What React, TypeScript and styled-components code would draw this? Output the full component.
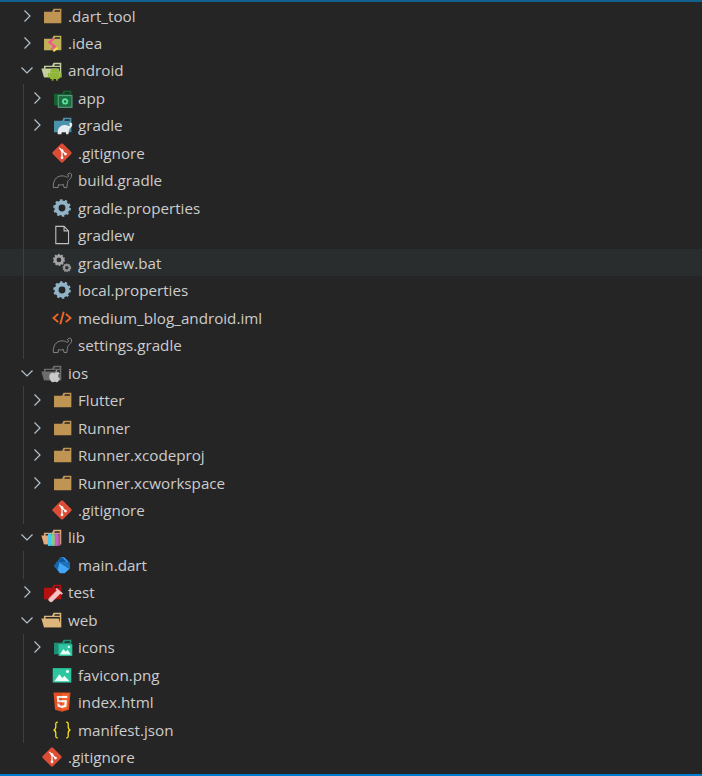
import React from 'react';
import styled, { createGlobalStyle } from 'styled-components';

const GlobalStyle = createGlobalStyle`
  html, body {
    margin: 0;
    padding: 0;
    background: #252526;
    overflow: hidden;
  }
`;

const FOLDER_CLOSED = 'M27.5,5.5H18.2L16.1,9.7H4.4V26.5H29.6V5.5Zm0,4.2H19.3l1.1-2.1h7.1Z';
const FOLDER_OPEN_BACK = 'M27.4,5.5H18.2L16.1,9.7H4.3V26.5H29.5V5.5Zm0,18.7H6.6V11.8H27.4Zm0-14.5H19.2l1-2.1h7.1V9.7Z';
const ELEPHANT =
  'M3.500 27C2.500 18 7 10 16 10c3 0 5 .700 6.500 1.700 1.500.800 3.200-.200 3.200-1.700 0-1-1-1.600-1.800-1.200.300-1.800 2-3 3.600-2.800 2 .300 2.800 2 2.300 4.500-.600 3-3 4.500-4.800 6.500-1 1.500-1.500 6-2 10h-4c-.500-2-.700-3-1-4.500-3 1-5 1-7 0-.300 1.700-.600 3-.800 4.500z';

const Closed = ({ color }: { color: string }) => <path d={FOLDER_CLOSED} fill={color} />;

const Opened = ({ color }: { color: string }) => (
  <>
    <path d={FOLDER_OPEN_BACK} fill={color} />
    <polygon points="25.7 13.7 .5 13.7 4.3 26.5 29.500 26.500" fill={color} />
  </>
);

const Gear = ({ cx, cy, r, color }: { cx: number; cy: number; r: number; color: string }) => {
  const width = r * 0.75;
  const outer = r + width * 0.1;
  const teeth = (2 * Math.PI * outer) / 16;
  return (
    <>
      <circle cx={cx} cy={cy} r={r} fill="none" stroke={color} strokeWidth={width} />
      <circle
        cx={cx}
        cy={cy}
        r={outer + width * 0.35}
        fill="none"
        stroke={color}
        strokeWidth={width * 0.7}
        strokeDasharray={`${teeth} ${teeth}`}
      />
    </>
  );
};

const DartTool = () => <Closed color="#c09553" />;

const Idea = () => (
  <>
    <Closed color="#c2b05a" />
    <path d="M19 9.500 12 15l8 6-5 4" fill="none" stroke="#f0568a" strokeWidth="3" />
    <path d="M18 28l6-5" stroke="#f5e04a" strokeWidth="3" />
  </>
);

const AndroidFolder = () => (
  <>
    <Opened color="#c3cf9c" />
    <path d="M13 20a7 6.500 0 0 1 14 0z" fill="#8fb53a" />
    <rect x="13" y="20.500" width="14" height="8.500" rx="1" fill="#8fb53a" />
    <rect x="10" y="20" width="2.400" height="7" rx="1.200" fill="#8fb53a" />
    <rect x="27.600" y="20" width="2.400" height="7" rx="1.200" fill="#8fb53a" />
    <rect x="15.500" y="28" width="2.600" height="3.500" fill="#8fb53a" />
    <rect x="21.900" y="28" width="2.600" height="3.500" fill="#8fb53a" />
  </>
);

const AppFolder = () => (
  <>
    <Closed color="#14632f" />
    <rect x="10.500" y="12.500" width="20" height="17" fill="#1a6d3f" stroke="#5fa58a" strokeWidth="1.500" />
    <Gear cx={20.500} cy={21} r={3} color="#62e0a0" />
  </>
);

const GradleFolder = () => (
  <>
    <Closed color="#4b93ad" />
    <path d={ELEPHANT} transform="translate(7 8) scale(.8)" fill="#e6ecef" />
  </>
);

const GitFile = () => (
  <>
    <rect x="5.500" y="5.500" width="21" height="21" rx="2" transform="rotate(45 16 16)" fill="#dd4c35" />
    <path d="M12 8.500 21 17.500M16 12.500V23" stroke="#fff" strokeWidth="1.800" fill="none" />
    <circle cx="16" cy="12.500" r="2" fill="#fff" />
    <circle cx="21" cy="17.500" r="2" fill="#fff" />
    <circle cx="16" cy="23" r="2" fill="#fff" />
  </>
);

const GradleFile = () => <path d={ELEPHANT} fill="none" stroke="#8f8f8f" strokeWidth="1.300" />;

const GearFile = () => <Gear cx={16} cy={16} r={8} color="#90b4c6" />;

const PlainFile = () => (
  <path d="M7 3.500h12l6.500 6.500v18.500H7zM19 3.500V10h6.500" fill="none" stroke="#c0c0c0" strokeWidth="1.600" />
);

const GearsFile = () => (
  <>
    <Gear cx={11.500} cy={11.500} r={5.500} color="#a3a3a3" />
    <Gear cx={23} cy={23} r={4} color="#949494" />
  </>
);

const XmlFile = () => (
  <path
    d="M10.500 10 3.500 16l7 6M21.500 10l7 6-7 6M18.500 7l-5 18"
    fill="none"
    stroke="#f1662a"
    strokeWidth="2.700"
  />
);

const IosFolder = () => (
  <>
    <Opened color="#6d6d6d" />
    <path
      d="M21 15c1.500-.4 2.500-1.700 2.500-3.300-1.500.2-2.700 1.500-2.500 3.300zm-1 1.500c-1.200 0-2-.8-3.300-.8-2.400 0-4.700 2-4.700 5.500 0 3.800 2.800 8.300 5 8.300 1.200 0 1.800-.8 3-.8s1.800.8 3 .8c1.800 0 3.500-2.800 4.500-5.500-3.500-1.500-3.500-6 0-7.300-1.200-1.500-3-1.700-4-1.700-1.300 0-2.400.8-3.500.8z"
      fill="#c9c9c9"
    />
  </>
);

const PlainFolder = () => <Closed color="#c09553" />;

const LibFolder = () => (
  <>
    <Opened color="#e3ab7b" />
    <rect x="10" y="11" width="5" height="18" fill="#44c7f0" />
    <rect x="15" y="11" width="5" height="18" fill="#7ecf7a" />
    <rect x="20" y="11" width="5" height="18" fill="#c65fd0" />
    <rect x="25" y="11" width="3" height="18" fill="#a2508f" />
  </>
);

const DartFile = () => (
  <>
    <path d="M4.500 17 14 5c2-1 4-.500 6 .500l7 7v9l-7 6.500h-7z" fill="#42a5f5" />
    <path d="M4.500 17 14 5c.800-.300 1.500-.400 2.300-.400L27 16v-3.500L20 5.500l5 7H12L9.500 23z" fill="#0d5b9e" />
    <path d="M4.500 17 14 5 12 13l-2.500 10z" fill="#1667ad" />
    <path d="M12 12.500h13l2 3.500V22L12 12.500z" fill="#1f6fb5" />
  </>
);

const TestFolder = () => (
  <>
    <Closed color="#b71010" />
    <path d="M24 13 12 25a3 3 0 0 0 5 4l12-12" fill="#f7c5c5" stroke="#f7c5c5" strokeWidth="1" />
    <path d="M22 11l9 8" stroke="#f7c5c5" strokeWidth="2.500" />
  </>
);

const WebFolder = () => <Opened color="#dcb67a" />;

const IconsFolder = () => (
  <>
    <Closed color="#1f8f76" />
    <rect x="11" y="12" width="20" height="17" fill="#2cc7a0" />
    <path d="M13 27l5-8 3.500 4 2.500-3 5 7z" fill="#eafff8" />
    <circle cx="26" cy="16" r="1.800" fill="#eafff8" />
  </>
);

const ImageFile = () => (
  <>
    <rect x="2.500" y="6" width="27" height="21" fill="#2cc7a0" />
    <path d="M5 25l7-10 4.500 5.500 3-3.500 7.500 8z" fill="#f0fff9" />
    <circle cx="24" cy="11" r="2.200" fill="#f0fff9" />
  </>
);

const HtmlFile = () => (
  <>
    <polygon points="5.902 27.201 3.655 2 28.345 2 26.095 27.197 15.985 30 5.902 27.201" fill="#e44f26" />
    <polygon points="16 27.858 24.17 25.593 26.092 4.061 16 4.061 16 27.858" fill="#f1662a" />
    <polygon points="16 13.407 11.91 13.407 11.628 10.242 16 10.242 16 7.151 8.25 7.151 8.324 7.981 9.083 16.498 16 16.498 16 13.407" fill="#ebebeb" />
    <polygon points="16 21.434 12.544 20.509 12.324 18.044 9.221 18.044 9.654 22.896 16 24.65 16 21.434" fill="#ebebeb" />
    <polygon points="15.989 13.407 15.989 16.498 19.795 16.498 19.437 20.507 15.989 21.437 15.989 24.653 22.326 22.896 23.174 13.407 15.989 13.407" fill="#fff" />
    <polygon points="15.989 7.151 15.989 10.242 23.455 10.242 23.732 7.151 15.989 7.151" fill="#fff" />
  </>
);

const JsonFile = () => (
  <path
    d="M10 4.500c-4 0-3 3-3 6.500 0 3-1 4.500-3 5 2 .500 3 2 3 5 0 3.500-1 6.500 3 6.500M22 4.500c4 0 3 3 3 6.500 0 3 1 4.500 3 5-2 .500-3 2-3 5 0 3.500 1 6.500-3 6.500"
    fill="none"
    stroke="#f5de19"
    strokeWidth="1.900"
  />
);

type Node = {
  name: string;
  icon: React.FC;
  open?: boolean;
  folder?: boolean;
  active?: boolean;
  children?: Node[];
};

const tree: Node[] = [
  { name: '.dart_tool', icon: DartTool, folder: true },
  { name: '.idea', icon: Idea, folder: true },
  {
    name: 'android',
    icon: AndroidFolder,
    folder: true,
    open: true,
    children: [
      { name: 'app', icon: AppFolder, folder: true },
      { name: 'gradle', icon: GradleFolder, folder: true },
      { name: '.gitignore', icon: GitFile },
      { name: 'build.gradle', icon: GradleFile },
      { name: 'gradle.properties', icon: GearFile },
      { name: 'gradlew', icon: PlainFile },
      { name: 'gradlew.bat', icon: GearsFile, active: true },
      { name: 'local.properties', icon: GearFile },
      { name: 'medium_blog_android.iml', icon: XmlFile },
      { name: 'settings.gradle', icon: GradleFile },
    ],
  },
  {
    name: 'ios',
    icon: IosFolder,
    folder: true,
    open: true,
    children: [
      { name: 'Flutter', icon: PlainFolder, folder: true },
      { name: 'Runner', icon: PlainFolder, folder: true },
      { name: 'Runner.xcodeproj', icon: PlainFolder, folder: true },
      { name: 'Runner.xcworkspace', icon: PlainFolder, folder: true },
      { name: '.gitignore', icon: GitFile },
    ],
  },
  {
    name: 'lib',
    icon: LibFolder,
    folder: true,
    open: true,
    children: [{ name: 'main.dart', icon: DartFile }],
  },
  { name: 'test', icon: TestFolder, folder: true },
  {
    name: 'web',
    icon: WebFolder,
    folder: true,
    open: true,
    children: [
      { name: 'icons', icon: IconsFolder, folder: true },
      { name: 'favicon.png', icon: ImageFile },
      { name: 'index.html', icon: HtmlFile },
      { name: 'manifest.json', icon: JsonFile },
    ],
  },
  { name: '.gitignore', icon: GitFile },
];

function TreeNode({ node, depth }: { node: Node; depth: number }) {
  const Icon = node.icon;
  return (
    <>
      <Row $depth={depth} $active={node.active}>
        <Twistie>
          {node.folder && (
            <svg width="16" height="16" viewBox="0 0 16 16">
              <path
                d={node.open ? 'M2.500 5.500 8 11l5.500-5.500' : 'M5.500 2.500 11 8l-5.500 5.500'}
                fill="none"
                stroke="#b4c2cc"
                strokeWidth="1.200"
              />
            </svg>
          )}
        </Twistie>
        <IconBox>
          <svg width="22" height="22" viewBox="0 0 32 32">
            <Icon />
          </svg>
        </IconBox>
        <Label>{node.name}</Label>
      </Row>
      {node.children && (
        <Group>
          {node.children.map((child, i) => (
            <TreeNode key={i} node={child} depth={depth + 1} />
          ))}
        </Group>
      )}
    </>
  );
}

export default function App() {
  return (
    <Panel>
      <GlobalStyle />
      <TopLine />
      <Tree>
        {tree.map((node, i) => (
          <TreeNode key={i} node={node} depth={0} />
        ))}
      </Tree>
      <BottomLine />
    </Panel>
  );
}

const Panel = styled.div`
  width: 702px;
  height: 776px;
  display: flex;
  flex-direction: column;
  background: #252526;
  color: #cccccc;
  font-family: 'Open Sans', 'Noto Sans', sans-serif;
`;

const TopLine = styled.div`
  height: 1.8px;
  background: #12608f;
`;

const Tree = styled.div`
  flex: 1;
`;

const BottomLine = styled.div`
  height: 2px;
  background: #007acc;
`;

const Group = styled.div`
  position: relative;

  &::before {
    content: '';
    position: absolute;
    left: 23px;
    top: 0;
    bottom: 0;
    width: 1px;
    background: #3f3f40;
  }
`;

const Row = styled.div<{ $depth: number; $active?: boolean }>`
  height: 27.48px;
  display: flex;
  align-items: center;
  padding-left: ${(p) => 19 + p.$depth * 10}px;
  background: ${(p) => (p.$active ? '#2a2d2e' : 'transparent')};
`;

const Twistie = styled.span`
  width: 16px;
  height: 16px;
  flex: none;
  display: flex;
`;

const IconBox = styled.span`
  width: 22px;
  height: 22px;
  margin-left: 6px;
  flex: none;
  display: flex;
`;

const Label = styled.span`
  margin-left: 5px;
  font-size: 15.2px;
  white-space: nowrap;
`;
